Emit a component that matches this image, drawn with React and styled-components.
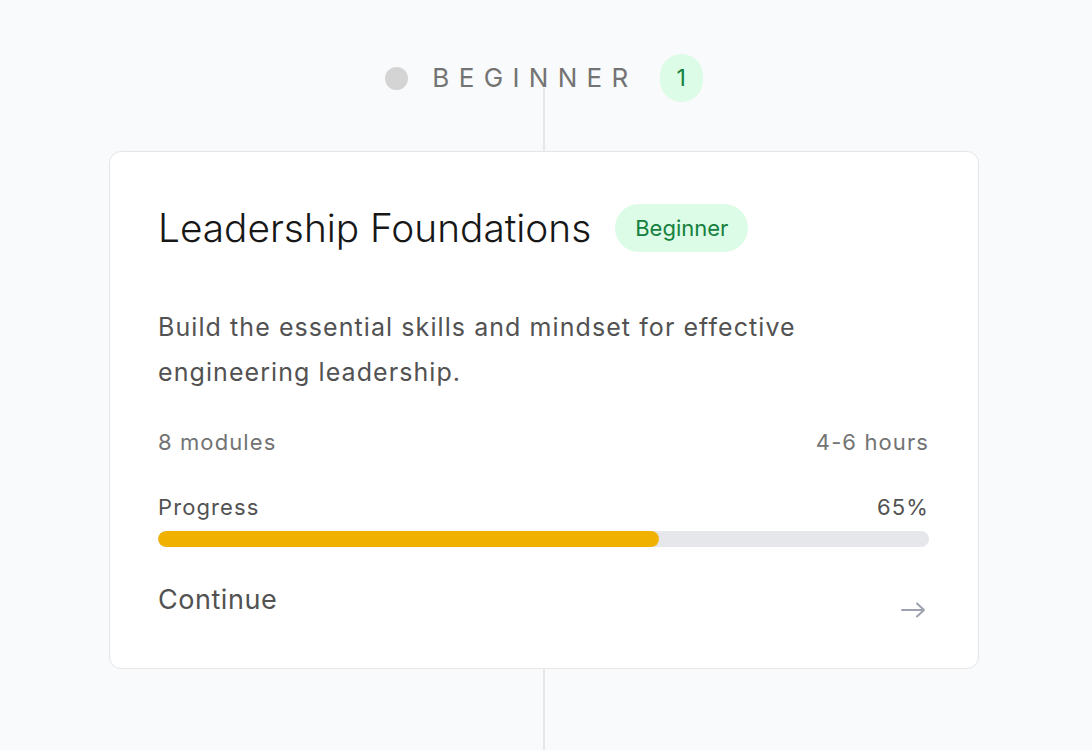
import React from 'react'
import styled, { createGlobalStyle } from 'styled-components'

const GlobalStyle = createGlobalStyle`
  html, body {
    margin: 0;
    padding: 0;
    background: #f9fafb;
    font-family: Inter, "Noto Sans", sans-serif;
    -webkit-font-smoothing: antialiased;
  }
`

const Page = styled.div`
  width: 1092px;
  height: 750px;
  overflow: hidden;
  display: flex;
  flex-direction: column;
  align-items: center;
  padding-top: 54px;
  padding-right: 4px;
  box-sizing: border-box;
`

const Header = styled.div`
  position: relative;
  z-index: 1;
  display: flex;
  align-items: center;
  gap: 24px;
  height: 48px;
`

const Dot = styled.span`
  width: 23px;
  height: 23px;
  border-radius: 50%;
  background: #d4d4d4;
`

const LevelLabel = styled.span`
  font-size: 26px;
  letter-spacing: 0.36em;
  margin-right: -2px;
  color: #737373;
  text-transform: uppercase;
  line-height: 1;
`

const CountBadge = styled.span`
  display: inline-flex;
  align-items: center;
  justify-content: center;
  height: 48px;
  min-width: 43px;
  box-sizing: border-box;
  padding: 0 14px;
  border-radius: 999px;
  background: #dcfce7;
  color: #15803d;
  font-size: 23px;
`

const Connector = styled.div`
  width: 2px;
  background: #e5e7eb;
  flex: ${p => (p.$grow ? '1' : 'none')};
  height: ${p => (p.$grow ? 'auto' : `${p.$h}px`)};
  margin-top: ${p => p.$mt || 0}px;
`

const Card = styled.div`
  width: 870px;
  box-sizing: border-box;
  background: #fff;
  border: 1px solid #e5e5e5;
  border-radius: 12px;
  padding: 52px 49px 48px 48px;
`

const TitleRow = styled.div`
  display: flex;
  align-items: center;
  gap: 24px;
  height: 48px;
`

const Title = styled.h2`
  margin: 0;
  font-size: 38.8px;
  font-weight: 300;
  color: #171717;
  line-height: 1.2;
`

const LevelPill = styled.span`
  display: inline-flex;
  align-items: center;
  height: 48px;
  padding: 0 20px;
  border-radius: 999px;
  background: #dcfce7;
  color: #15803d;
  font-size: 22px;
`

const Description = styled.p`
  margin: 53px 0 0;
  max-width: 700px;
  font-size: 25px;
  line-height: 45px;
  letter-spacing: 0.043em;
  color: #525252;
`

const SpreadRow = styled.div`
  display: flex;
  justify-content: space-between;
  align-items: center;
  margin-top: ${p => p.$mt}px;
  font-size: 22px;
  line-height: 33px;
  letter-spacing: 0.05em;
  color: ${p => p.$color};
`

const Track = styled.div`
  margin-top: 7px;
  height: 16px;
  border-radius: 999px;
  background: #e5e7eb;
  overflow: hidden;
`

const Fill = styled.div`
  height: 100%;
  border-radius: 999px;
  background: #f0b100;
`

const Footer = styled.div`
  display: flex;
  justify-content: space-between;
  align-items: flex-start;
  margin-top: 33px;
`

const ContinueText = styled.span`
  font-size: 27px;
  line-height: 40px;
  letter-spacing: 0.02em;
  color: #525252;
`

const Arrow = styled.svg`
  margin-top: 21px;
  margin-right: 1px;
`

export default function App() {
  const progress = 65
  return (
    <>
      <GlobalStyle />
      <Page>
        <Header>
          <Dot />
          <LevelLabel>Beginner</LevelLabel>
          <CountBadge>1</CountBadge>
        </Header>
        <Connector $h={63} $mt={-14} />
        <Card>
          <TitleRow>
            <Title>Leadership Foundations</Title>
            <LevelPill>Beginner</LevelPill>
          </TitleRow>
          <Description>
            Build the essential skills and mindset for effective engineering leadership.
          </Description>
          <SpreadRow $mt={31} $color="#737373">
            <span>8 modules</span>
            <span>4-6 hours</span>
          </SpreadRow>
          <SpreadRow $mt={32} $color="#525252">
            <span>Progress</span>
            <span>{progress}%</span>
          </SpreadRow>
          <Track>
            <Fill style={{ width: `${progress}%` }} />
          </Track>
          <Footer>
            <ContinueText>Continue</ContinueText>
            <Arrow width="28" height="18" viewBox="0 0 28 18" fill="none" stroke="#9ca3af" strokeWidth="2" strokeLinecap="round" strokeLinejoin="round">
              <path d="M2 9h22M17 2.5l7 6.5-7 6.5" />
            </Arrow>
          </Footer>
        </Card>
        <Connector $grow />
      </Page>
    </>
  )
}
